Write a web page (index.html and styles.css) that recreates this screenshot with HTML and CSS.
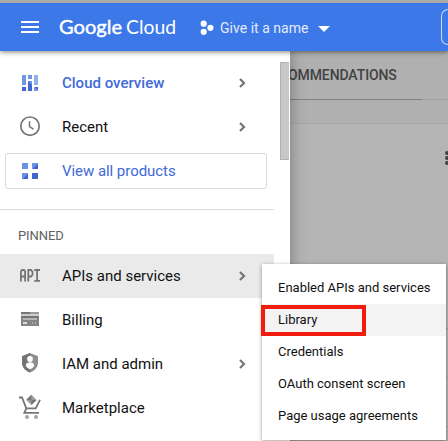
FILE: index.html
```html
<!DOCTYPE html>
<html lang="en">
<head>
<meta charset="utf-8">
<title>Google Cloud</title>
<link rel="stylesheet" href="styles.css">
</head>
<body>
<header class="topbar">
  <svg class="burger" width="18" height="12" viewBox="0 0 18 12" fill="#fff"><path d="M0 0h18v2H0zM0 5h18v2H0zM0 10h18v2H0z"/></svg>
  <svg class="logo" width="118" height="28" viewBox="0 0 118 28" fill="#fff"><text class="logo-google" x="0" y="20.500" textLength="63" lengthAdjust="spacingAndGlyphs">Google</text><text class="logo-cloud" x="67" y="20.500" textLength="50" lengthAdjust="spacingAndGlyphs">Cloud</text></svg>
  <svg class="dots" width="14" height="16" viewBox="0 0 14 16" fill="#fff"><circle cx="3.700" cy="3.700" r="3.100"/><circle cx="10.400" cy="7.800" r="3.100"/><circle cx="3.700" cy="11.800" r="3.100"/></svg>
  <span class="project">Give it a name</span>
  <svg class="caret" width="12" height="6" viewBox="0 0 12 6" fill="#fff"><path d="M0 0h12L6 6z"/></svg>
  <span class="search"></span>
</header>
<div class="body">
  <nav class="drawer">
    <div class="row active">
      <svg class="icon" viewBox="0 0 24 24"><path fill="#7096e6" d="M4 4h4v10H4zM10 4h4v4h-4z"/><path fill="#8fafed" d="M16 4h4v10h-4z"/><path fill="#4169d3" d="M4 16h4v4H4zM10 10h4v10h-4zM16 16h4v4z"/><path fill="#7096e6" d="M10 10h4v4zM16 16v4h4z"/></svg>
      <span>Cloud overview</span>
      <svg class="chev" viewBox="0 0 7 10"><path d="M1 1l4 4-4 4"/></svg>
    </div>
    <div class="row">
      <svg class="icon" viewBox="0 0 24 24" fill="none" stroke="#757575"><circle cx="12" cy="11.200" r="9.200" stroke-width="1.700"/><path d="M11.500 6.200v5.400l4 2.500" stroke-width="1.500"/></svg>
      <span>Recent</span>
      <svg class="chev" viewBox="0 0 7 10"><path d="M1 1l4 4-4 4"/></svg>
    </div>
    <div class="all">
      <svg class="icon" viewBox="0 0 24 24"><path fill="#6b90e4" d="M4 4h6v6H4zM14 4h6l-6 6zM4 14h6l-6 6z"/><path fill="#3f66d0" d="M20 4v6h-6zM10 14v6H4zM14 14h6v6h-6z"/></svg>
      <span>View all products</span>
    </div>
    <div class="divider"></div>
    <div class="heading">PINNED</div>
    <div class="row selected">
      <svg class="icon" viewBox="0 0 24 24" fill="none" stroke="#757575" stroke-width="1.800"><path d="M2.900 17.500V7.500L4 6h2L7.100 7.500V17.500M3 12.500h4M10.300 17.500V6h2.700l1.500 1.500v3.500L13 12.500h-2.700M16.300 6h5.700M16.300 16.800h5.700M19.100 6v10.500"/></svg>
      <span>APIs and services</span>
      <svg class="chev" viewBox="0 0 7 10"><path d="M1 1l4 4-4 4"/></svg>
    </div>
    <div class="row">
      <svg class="icon" viewBox="0 0 24 24"><path fill="#757575" d="M3 4h18v14H3z"/><path fill="#9b9b9b" d="M12 4h9v2h-9z"/><path fill="#ccc" d="M3 6h18v2H3z"/><path fill="#858585" d="M3 10h18v8H3z"/><path fill="#b5b5b5" d="M5 10h14v2H5z"/><path fill="#ddd" d="M5 14h4v2H5zM14 14.500h1v1h-1zM17 14.500h1v1h-1z"/></svg>
      <span>Billing</span>
    </div>
    <div class="row">
      <svg class="icon" viewBox="0 0 24 24"><path fill="#8d8d8d" d="M12 1l8 3.200v6c0 4.600-3 8.500-8 10.300-5-1.800-8-5.700-8-10.300v-6z"/><path fill="#757575" d="M12 1v19.500c-5-1.800-8-5.700-8-10.300v-6z"/><circle cx="12" cy="7" r="2.900" fill="#fff"/><path fill="#fff" d="M7.800 13.500c0-2.300 2-3.300 4.200-3.300s4.200 1 4.200 3.300c-.6 1.800-2 3-4.200 3.700-2.200-.7-3.600-1.900-4.200-3.700z"/></svg>
      <span>IAM and admin</span>
      <svg class="chev" viewBox="0 0 7 10"><path d="M1 1l4 4-4 4"/></svg>
    </div>
    <div class="row">
      <svg class="icon" viewBox="0 0 24 24"><path fill="none" stroke="#757575" stroke-width="1.800" d="M1 1.500h3l4.300 10.800h9.400L22 3.800M8.300 12.300l-2 4.500h14.700"/><path fill="#9b9b9b" d="M13.400-1.300L8.200 3.900l5.200 5.200 5.200-5.200z"/><path fill="#757575" d="M13.400-1.300v5.200H8.200zM13.400 3.900h5.200l-5.200 5.200z"/><circle cx="9" cy="21" r="2" fill="#a5a5a5"/><circle cx="18" cy="21" r="2" fill="#a5a5a5"/></svg>
      <span>Marketplace</span>
    </div>
    <div class="scroll"></div>
  </nav>
  <main class="page">
    <div class="tabs"><span>OMMENDATIONS</span></div>
    <div class="tabgap"></div>
    <div class="card">
      <svg class="more" width="3" height="14" viewBox="0 0 3 14" fill="#424242"><circle cx="2" cy="2" r="2"/><circle cx="2" cy="7" r="2"/><circle cx="2" cy="12" r="2"/></svg>
      <div class="lines"><i></i><i></i><i></i></div>
    </div>
  </main>
</div>
<div class="submenu">
  <div class="item">Enabled APIs and services</div>
  <div class="item hover">Library</div>
  <div class="item">Credentials</div>
  <div class="item">OAuth consent screen</div>
  <div class="item">Page usage agreements</div>
  <div class="mark"></div>
</div>
</body>
</html>
```
FILE: styles.css
```css
* { box-sizing: border-box; }
body {
  margin: 0;
  width: 448px;
  height: 441px;
  overflow: hidden;
  position: relative;
  background: #b0b0b0;
  font-family: Roboto, sans-serif;
  color: #111;
}
.topbar {
  display: flex;
  align-items: center;
  height: 51px;
  padding-left: 21px;
  border-top: 3px solid #aaa;
  background: #3c78e7;
  position: relative;
  z-index: 2;
  box-shadow: 0 1px 5px rgba(0, 0, 0, .5);
}
.topbar > * { flex: none; }
.logo { margin-left: 20px; }
.logo text { font-family: Lato, sans-serif; font-size: 20px; font-weight: 400; }
.logo .logo-google { stroke: #fff; stroke-width: .45px; }
.dots { margin-left: 23px; margin-top: 2px; }
.project { margin-left: 6px; margin-top: 2px; font-size: 14px; letter-spacing: .02px; color: #e3ebfc; width: 88px; white-space: nowrap; }
.caret { margin-left: 10px; margin-top: 3px; }
.topbar .search { flex: 1; height: 36px; margin-left: 111px; border: 1px solid #c9d9f8; border-right: 0; border-radius: 8px 0 0 8px; }
.body { display: flex; height: 390px; }
.drawer {
  flex: none;
  width: 290px;
  padding-top: 10px;
  background: #fff;
  position: relative;
  box-shadow: 0 0 14px rgba(0, 0, 0, .35);
  z-index: 1;
}
.row, .all { display: flex; align-items: center; font-size: 15px; }
.row { width: 274px; height: 44px; padding: 0 28px 0 18px; }
.icon { flex: none; width: 24px; height: 24px; margin-right: 20px; overflow: visible; }
.chev { width: 7px; height: 10px; margin-left: auto; fill: none; stroke: #757575; stroke-width: 2.2; overflow: visible; }
.active { color: #4169d7; font-weight: 500; }
.all { width: 262px; height: 36px; margin: 4px 0 0 5px; padding-left: 12px; border: 1px solid #dadada; border-radius: 3px; color: #4169d7; letter-spacing: -.05px; }
.divider { width: 274px; height: 1px; margin-top: 20px; background: #dcdcdc; }
.heading { height: 44px; padding: 4px 0 0 18px; line-height: 44px; font-size: 13px; letter-spacing: -.1px; color: #616161; }
.selected { background: #eaeaea; }
.scroll { position: absolute; left: 280px; top: 11px; width: 9px; height: 98px; background: #c8c8c8; border: 1px solid #b0b0b0; border-right: 0; }
.page { flex: 1; min-width: 0; }
.tabs { height: 49px; border-bottom: 1px solid; border-image: linear-gradient(90deg, #808080 131px, #a0a0a0 131px) 1; padding-top: 14px; font-size: 14px; line-height: 20px; font-weight: 500; letter-spacing: -.1px; color: #424242; white-space: nowrap; }
.tabs span { margin-left: -2px; }
.tabgap { height: 23px; }
.card { height: 318px; border-top: 1px solid #a7a7a7; background: #b4b4b4; padding: 27px 0 0 155px; }
.more { display: block; }
.lines { padding-top: 163px; }
.lines i { display: block; height: 49px; border-top: 1px solid #a0a0a0; }
.lines i:last-child { height: 14px; }
.submenu {
  position: absolute;
  z-index: 3;
  left: 262px;
  top: 264px;
  width: 184px;
  height: 176px;
  padding: 8px 0;
  background: #fff;
  box-shadow: 0 1px 4px rgba(0, 0, 0, .4);
}
.item { height: 32px; padding-left: 16px; line-height: 31px; font-size: 13px; white-space: nowrap; }
.hover { background: #f3f3f3; }
.mark { position: absolute; left: -1px; top: 41px; width: 105px; height: 31px; border: 4px solid #f11c0e; }
```
